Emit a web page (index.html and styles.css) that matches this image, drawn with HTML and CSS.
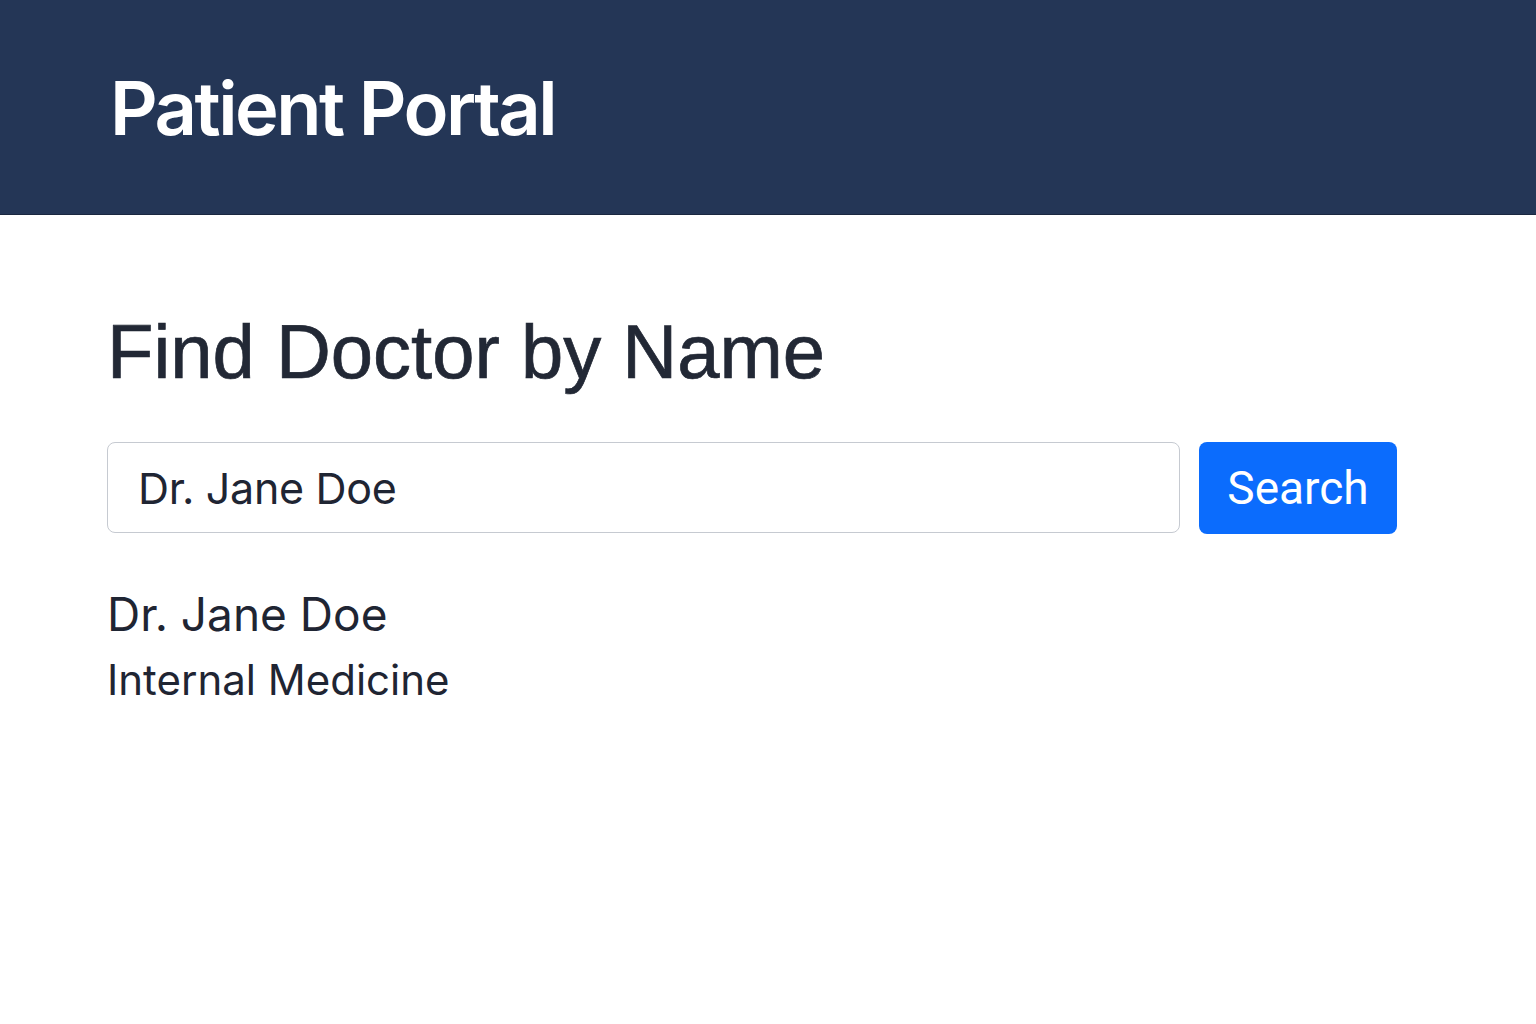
FILE: index.html
```html
<!DOCTYPE html>
<html lang="en">
<head>
<meta charset="utf-8">
<title>Patient Portal</title>
<link rel="stylesheet" href="styles.css">
</head>
<body>
<header class="topbar">
  <div class="brand">Patient Portal</div>
</header>
<main class="content">
  <h1 class="page-title">Find Doctor by Name</h1>
  <form class="search-row">
    <input class="search-input" type="text" value="Dr. Jane Doe">
    <button class="search-btn" type="button">Search</button>
  </form>
  <div class="result">
    <div class="result-name">Dr. Jane Doe</div>
    <div class="result-spec">Internal Medicine</div>
  </div>
</main>
</body>
</html>
```
FILE: styles.css
```css
html, body {
  margin: 0;
  padding: 0;
  background: #ffffff;
}
body {
  font-family: Inter, "Noto Sans", sans-serif;
  color: #1f2533;
}
.topbar {
  background: #243656;
  height: 215px;
  box-sizing: border-box;
  border-bottom: 1px solid #1a2740;
  display: flex;
  align-items: flex-start;
  padding: 63px 0 0 110px;
}
.brand {
  color: #ffffff;
  font-family: Inter, sans-serif;
  font-weight: 600;
  font-size: 74px;
  line-height: 90px;
  letter-spacing: -2.5px;
}
.content {
  padding: 0 0 0 107px;
  display: flex;
  flex-direction: column;
}
.page-title {
  margin: 92px 0 0 0;
  font-family: "Liberation Sans", Arial, sans-serif;
  font-weight: 400;
  font-size: 76px;
  line-height: 90px;
  color: #222835;
  -webkit-text-stroke: 0.7px #222835;
}
.search-row {
  margin-top: 45px;
  display: flex;
  gap: 19px;
  align-items: stretch;
}
.search-input {
  width: 1073px;
  height: 91px;
  box-sizing: border-box;
  border: 1.5px solid #c6cad1;
  border-radius: 8px;
  padding: 0 0 0 30px;
  font-family: Inter, sans-serif;
  font-size: 43px;
  letter-spacing: -0.3px;
  color: #1f2533;
  outline: none;
  background: #fff;
}
.search-btn {
  width: 198px;
  height: 92px;
  box-sizing: border-box;
  border: none;
  border-radius: 8px;
  background: #0b6cfd;
  color: #ffffff;
  font-family: Roboto, sans-serif;
  font-size: 46px;
  padding: 0;
}
.result {
  margin-top: 50px;
  display: flex;
  flex-direction: column;
}
.result-name {
  font-family: Inter, sans-serif;
  font-size: 46px;
  line-height: 60px;
  color: #1f2533;
}
.result-spec {
  font-family: Inter, sans-serif;
  font-size: 42px;
  line-height: 72px;
  color: #1f2533;
}
```
